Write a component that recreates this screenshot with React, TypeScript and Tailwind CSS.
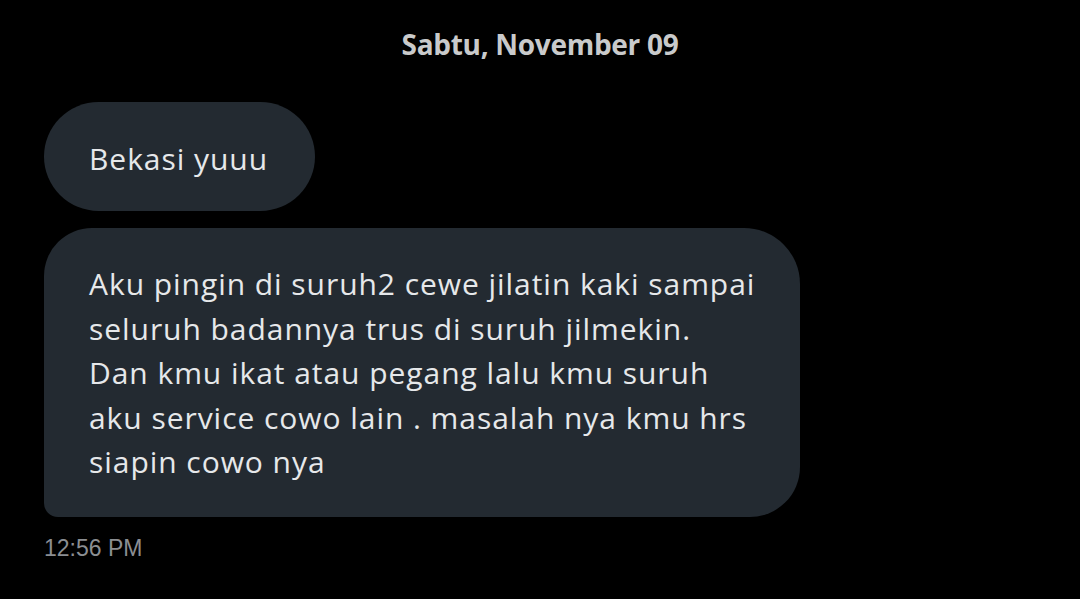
import React from 'react';

const lines = [
  'Aku pingin di suruh2 cewe jilatin kaki sampai',
  'seluruh badannya trus di suruh jilmekin.',
  'Dan kmu ikat atau pegang lalu kmu suruh',
  'aku service cowo lain . masalah nya kmu hrs',
  'siapin cowo nya',
];

export default function App() {
  return (
    <div className="w-[1080px] h-[599px] bg-black overflow-hidden font-['Open_Sans',sans-serif]">
      {/* Date header */}
      <div className="pt-[27px] text-center text-[28px] leading-[34px] font-bold text-[#c9cacb] tracking-[-0.3px]">
        Sabtu, November 09
      </div>

      <div className="pl-[44px] pt-[41px] flex flex-col items-start gap-[17px]">
        {/* Short bubble */}
        <div className="h-[109px] w-[271px] rounded-[55px] bg-[#232a31] flex items-center pl-[45px] pt-[4px]">
          <span className="text-[30px] leading-[36px] text-[#e6e8ea] tracking-[0.95px]">Bekasi yuuu</span>
        </div>

        {/* Long bubble */}
        <div className="w-[756px] h-[289px] bg-[#232a31] rounded-tl-[48px] rounded-tr-[56px] rounded-br-[50px] rounded-bl-[14px] pl-[45px] pt-[34px]">
          {lines.map((l) => (
            <div key={l} className="text-[30px] leading-[44.5px] text-[#e6e8ea] tracking-[0.95px] whitespace-nowrap">
              {l}
            </div>
          ))}
        </div>
      </div>

      {/* Timestamp */}
      <div className="pl-[44px] pt-[17px] text-[23px] leading-[28px] text-[#8b8e92] font-['Liberation_Sans',sans-serif]">12:56 PM</div>
    </div>
  );
}
